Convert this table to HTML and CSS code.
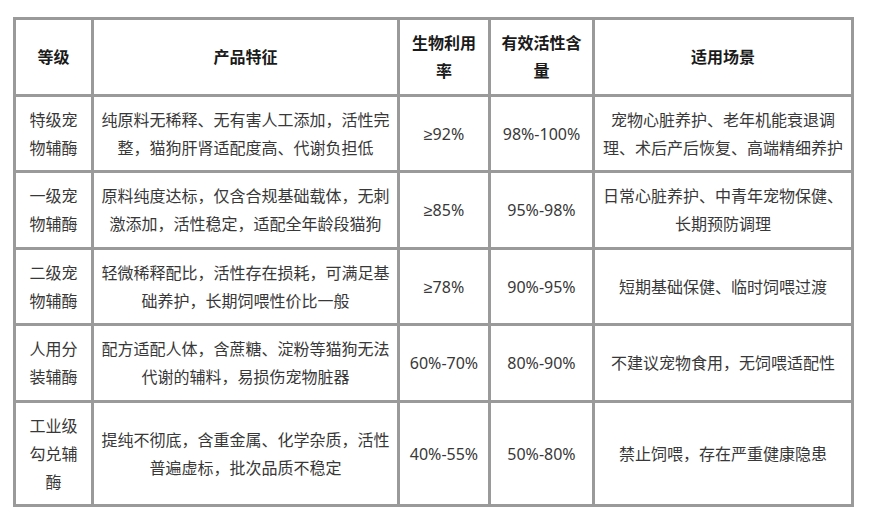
FILE: index.html
```html
<!DOCTYPE html>
<html lang="zh-CN">
<head>
<meta charset="utf-8">
<title>辅酶等级对比</title>
<link rel="stylesheet" href="styles.css">
</head>
<body>
<div class="table">
  <div class="cell head">等级</div>
  <div class="cell head">产品特征</div>
  <div class="cell head">生物利用率</div>
  <div class="cell head">有效活性含量</div>
  <div class="cell head">适用场景</div>

  <div class="cell">特级宠物辅酶</div>
  <div class="cell">纯原料无稀释、无有害人工添加，活性完整，猫狗肝肾适配度高、代谢负担低</div>
  <div class="cell">≥92%</div>
  <div class="cell">98%-100%</div>
  <div class="cell">宠物心脏养护、老年机能衰退调理、术后产后恢复、高端精细养护</div>

  <div class="cell">一级宠物辅酶</div>
  <div class="cell">原料纯度达标，仅含合规基础载体，无刺激添加，活性稳定，适配全年龄段猫狗</div>
  <div class="cell">≥85%</div>
  <div class="cell">95%-98%</div>
  <div class="cell">日常心脏养护、中青年宠物保健、长期预防调理</div>

  <div class="cell">二级宠物辅酶</div>
  <div class="cell">轻微稀释配比，活性存在损耗，可满足基础养护，长期饲喂性价比一般</div>
  <div class="cell">≥78%</div>
  <div class="cell">90%-95%</div>
  <div class="cell">短期基础保健、临时饲喂过渡</div>

  <div class="cell">人用分装辅酶</div>
  <div class="cell">配方适配人体，含蔗糖、淀粉等猫狗无法代谢的辅料，易损伤宠物脏器</div>
  <div class="cell">60%-70%</div>
  <div class="cell">80%-90%</div>
  <div class="cell">不建议宠物食用，无饲喂适配性</div>

  <div class="cell">工业级勾兑辅酶</div>
  <div class="cell">提纯不彻底，含重金属、化学杂质，活性普遍虚标，批次品质不稳定</div>
  <div class="cell">40%-55%</div>
  <div class="cell">50%-80%</div>
  <div class="cell">禁止饲喂，存在严重健康隐患</div>
</div>
</body>
</html>
```

FILE: styles.css
```css
html, body {
  margin: 0;
  padding: 0;
  background: #ffffff;
}

body {
  padding: 17px 0 0 13px;
  font-family: "Noto Sans", "Liberation Sans", "Noto Sans CJK SC", sans-serif;
  font-size: 16px;
  color: #383838;
}

.table {
  display: grid;
  grid-template-columns: 75px 303px 88px 101px 256px;
  grid-template-rows: 74px 73px 74px 73px 74px 101px;
  gap: 3px;
  padding: 3px;
  background: #9a9a9a;
  width: 841px;
  box-sizing: border-box;
}

.cell {
  background: #ffffff;
  display: flex;
  align-items: center;
  justify-content: center;
  text-align: center;
  padding: 0 7px;
  line-height: 28px;
  word-break: break-all;
}

.head {
  font-weight: bold;
  color: #1a1a1a;
}
```
